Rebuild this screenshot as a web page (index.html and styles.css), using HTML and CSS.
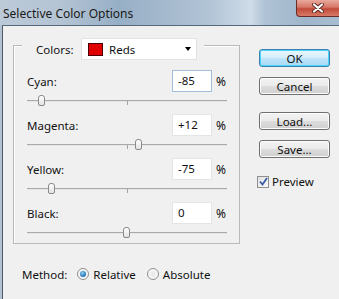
FILE: index.html
```html
<!DOCTYPE html>
<html>
<head>
    <meta charset="UTF-8">
    <title>Selective Color Options</title>
    <link rel="stylesheet" href="styles.css">
</head>
<body>
<div class="window">
    <div class="titlebar">
        <span class="title">Selective Color Options</span>
        <div class="close">
            <svg width="12" height="10" viewBox="0 0 12 10">
                <path d="M2 1.5 L10 8.5 M10 1.5 L2 8.5" stroke="#5a2a22" stroke-width="4" stroke-linecap="round"/>
                <path d="M2 1.5 L10 8.5 M10 1.5 L2 8.5" stroke="#fff" stroke-width="2.2" stroke-linecap="round"/>
            </svg>
        </div>
    </div>
    <div class="client">
        <div class="main">
            <div class="group">
                <div class="group-head">
                    <span class="head-lbl">Colors:</span>
                    <div class="select">
                        <span class="swatch"></span>
                        <span class="sel-text">Reds</span>
                        <span class="caret"></span>
                    </div>
                </div>
                <div class="rows">
                    <div class="row">
                        <div class="row-top">
                            <span class="lbl">Cyan:</span>
                            <span class="num focus">-85</span>
                            <span class="pct">%</span>
                        </div>
                        <div class="slider">
                            <div class="track"></div>
                            <span class="tick"></span>
                            <span class="thumb" style="left:15px"></span>
                        </div>
                    </div>
                    <div class="row">
                        <div class="row-top">
                            <span class="lbl">Magenta:</span>
                            <span class="num">+12</span>
                            <span class="pct">%</span>
                        </div>
                        <div class="slider">
                            <div class="track"></div>
                            <span class="tick"></span>
                            <span class="thumb" style="left:112px"></span>
                        </div>
                    </div>
                    <div class="row">
                        <div class="row-top">
                            <span class="lbl">Yellow:</span>
                            <span class="num">-75</span>
                            <span class="pct">%</span>
                        </div>
                        <div class="slider">
                            <div class="track"></div>
                            <span class="tick"></span>
                            <span class="thumb" style="left:25px"></span>
                        </div>
                    </div>
                    <div class="row">
                        <div class="row-top">
                            <span class="lbl">Black:</span>
                            <span class="num">0</span>
                            <span class="pct">%</span>
                        </div>
                        <div class="slider">
                            <div class="track"></div>
                            <span class="tick"></span>
                            <span class="thumb" style="left:100px"></span>
                        </div>
                    </div>
                </div>
            </div>
            <div class="method">
                <span class="method-lbl">Method:</span>
                <span class="radio on"></span>
                <span class="radio-text">Relative</span>
                <span class="radio"></span>
                <span class="radio-text">Absolute</span>
            </div>
        </div>
        <div class="side">
            <div class="btn default">OK</div>
            <div class="btn">Cancel</div>
            <div class="btn gap">Load...</div>
            <div class="btn">Save...</div>
            <div class="check-row">
                <span class="check">
                    <svg width="9" height="9" viewBox="0 0 9 9">
                        <path d="M1 4.5 L3.5 7.5 L8 1" fill="none" stroke="#3b5ea8" stroke-width="1.8"/>
                    </svg>
                </span>
                <span>Preview</span>
            </div>
        </div>
    </div>
</div>
</body>
</html>
```

FILE: styles.css
```css
* {
    margin: 0;
    padding: 0;
    box-sizing: border-box;
}
body {
    background: #b3c2d1;
    font-family: "Noto Sans", "DejaVu Sans", sans-serif;
    font-size: 11.5px;
    color: #111;
}
.window {
    width: 339px;
    height: 299px;
    display: flex;
    flex-direction: column;
    overflow: hidden;
}
.titlebar {
    height: 25px;
    flex: none;
    display: flex;
    justify-content: space-between;
    align-items: flex-start;
    background: linear-gradient(90deg, #bccad8 0%, #b4c4d4 18%, #97afc6 35%, #a6bace 50%, #b2c4d6 62%, #cfdce9 74%, #b0c3d6 78%, #9fb5ca 90%, #a9bdd0 100%);
}
.title {
    padding: 5px 0 0 3px;
    font-size: 12px;
    color: #1a1a1a;
}
.close {
    width: 43px;
    height: 17px;
    display: flex;
    align-items: center;
    justify-content: center;
    background: linear-gradient(#e9aa9e, #d67565 45%, #c24a39 55%, #d87a66);
    border: 1px solid #6a2d25;
    border-top: none;
    border-right: none;
    border-radius: 0 0 0 4px;
}
.client {
    flex: 1;
    display: flex;
    background: #f0f0f0;
    border-top: 1px solid #56687a;
    border-left: 1px solid #4e5c6a;
    margin-left: 2px;
}
.main {
    padding: 19px 0 0 10px;
}
.group {
    width: 227px;
    border: 1px solid #b9b9b9;
    box-shadow: inset 1px 1px 0 #fff;
}
.group-head {
    display: inline-flex;
    align-items: center;
    height: 22px;
    margin: -8px 0 0 8px;
    padding: 0 7px 0 14px;
    background: #f0f0f0;
    vertical-align: top;
}
.head-lbl {
    width: 45px;
}
.select {
    width: 116px;
    height: 22px;
    display: flex;
    align-items: center;
    background: #fff;
    border: 1px solid #e2e2e2;
    padding-left: 6px;
}
.swatch {
    width: 15px;
    height: 13px;
    background: #e00000;
    border: 1px solid #4a0000;
}
.sel-text {
    flex: 1;
    margin-left: 6px;
}
.caret {
    width: 0;
    height: 0;
    border-left: 3.5px solid transparent;
    border-right: 3.5px solid transparent;
    border-top: 4px solid #000;
    margin-right: 5px;
}
.rows {
    display: flex;
    flex-direction: column;
    gap: 8px;
    padding: 9px 12px 5px 13px;
}
.row-top {
    display: flex;
    align-items: center;
    height: 22px;
}
.lbl {
    flex: 1;
}
.num {
    width: 40px;
    height: 22px;
    line-height: 20px;
    padding-left: 5px;
    background: #fff;
    border: 1px solid #e4e4e4;
}
.num.focus {
    border-color: #a3bfd9;
}
.pct {
    width: 11px;
    margin-left: 4px;
    font-size: 12px;
}
.slider {
    position: relative;
    height: 14px;
    padding-top: 8px;
}
.track {
    border-top: 1px solid #a9a9a9;
    border-bottom: 1px solid #e6e6e6;
}
.tick {
    position: absolute;
    left: 100px;
    top: 9px;
    width: 1px;
    height: 4px;
    background: #a3a3a3;
}
.thumb {
    position: absolute;
    top: 3px;
    width: 7px;
    height: 11px;
    margin-left: -4px;
    border: 1px solid #8a8a8a;
    border-radius: 3px 3px 2px 2px;
    background: linear-gradient(#ffffff, #e2e2e2);
}
.method {
    display: flex;
    align-items: center;
    height: 16px;
    margin-top: 22px;
    padding-left: 9px;
}
.method-lbl {
    margin-right: 10px;
}
.radio {
    width: 12px;
    height: 12px;
    border-radius: 50%;
    border: 1px solid #8e8f8f;
    background: radial-gradient(circle, #e6e6e6 0%, #f8f8f8 70%);
    display: flex;
    align-items: center;
    justify-content: center;
}
.radio.on::after {
    content: "";
    width: 6px;
    height: 6px;
    border-radius: 50%;
    background: radial-gradient(circle at 40% 35%, #8fd0f5, #1b6fb0 70%, #0f4f88);
}
.radio-text {
    margin: 0 11px 0 4px;
}
.side {
    margin-left: 19px;
    padding-top: 23px;
    display: flex;
    flex-direction: column;
}
.btn {
    width: 71px;
    height: 18px;
    margin-bottom: 10px;
    display: flex;
    align-items: center;
    justify-content: center;
    border: 1px solid #707070;
    border-radius: 3px;
    background: linear-gradient(#f3f3f3 0%, #ebebeb 48%, #dddddd 52%, #cfcfcf 100%);
    box-shadow: inset 0 0 0 1px #fcfcfc;
}
.btn.default {
    border-color: #3c7fb1;
    background: linear-gradient(#e9f6fd 0%, #d6eefb 48%, #bfe5fb 52%, #a7d9f5 100%);
    box-shadow: inset 0 0 0 1px #48d6fb;
}
.btn.gap {
    margin-top: 7px;
}
.check-row {
    display: flex;
    align-items: center;
    margin-top: 6px;
    margin-left: -2px;
}
.check {
    width: 12px;
    height: 12px;
    margin-right: 3px;
    border: 1px solid #8e8f8f;
    background: linear-gradient(135deg, #e0e0e0, #fbfbfb);
    display: flex;
    align-items: center;
    justify-content: center;
}
```
